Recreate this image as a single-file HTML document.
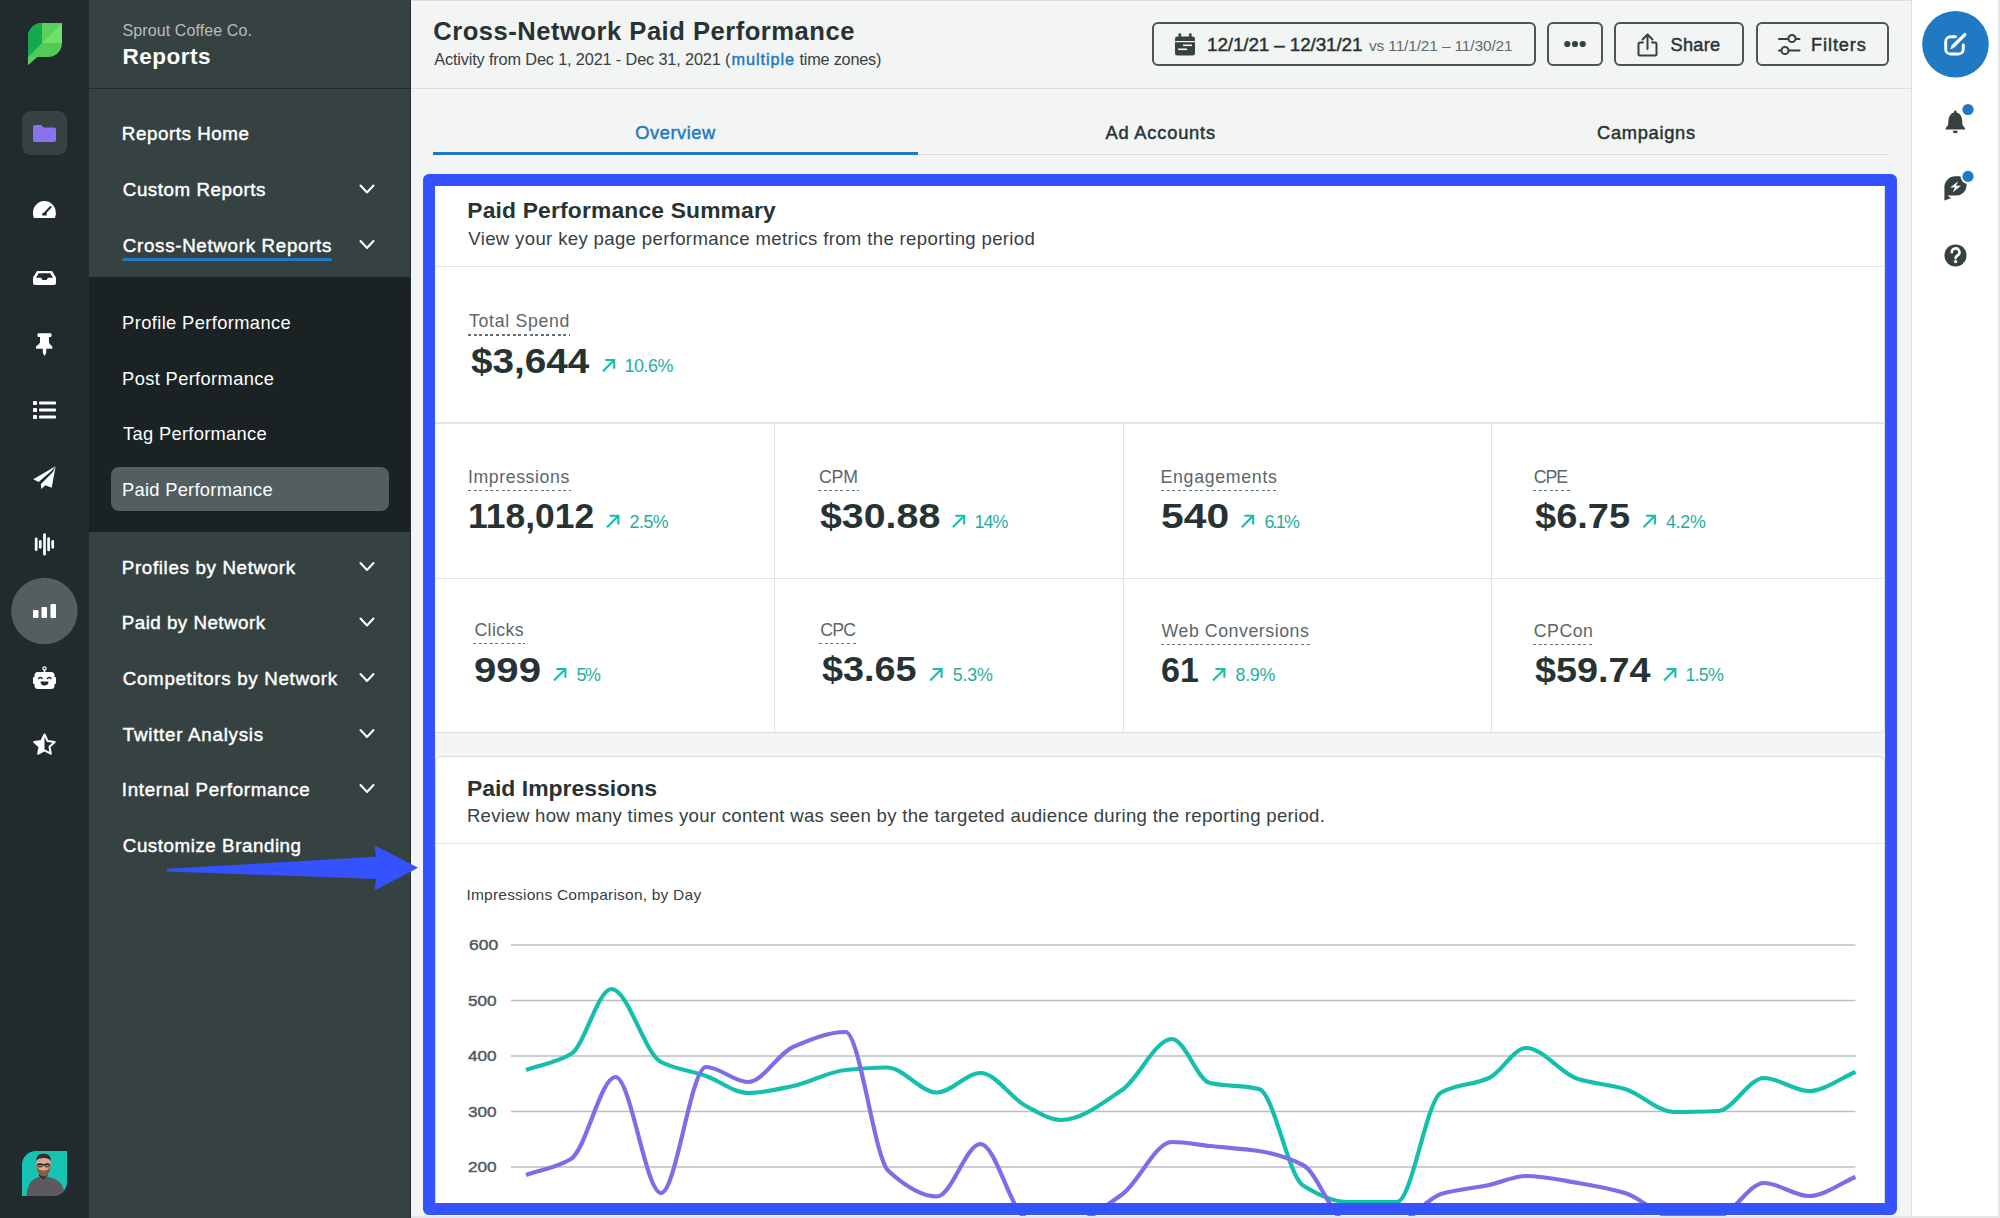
<!DOCTYPE html>
<html><head><meta charset="utf-8">
<style>
html,body{margin:0;padding:0;}
body{width:2000px;height:1218px;overflow:hidden;position:relative;background:#f3f4f4;font-family:"Liberation Sans",sans-serif;}
.a{position:absolute;}
.t{position:absolute;white-space:nowrap;line-height:1.2;font-family:"Liberation Sans",sans-serif;}
.ul{position:absolute;height:1.3px;background-image:repeating-linear-gradient(90deg,#657172 0 3px,transparent 3px 5.6px);}
.btn{position:absolute;box-sizing:border-box;border:2px solid #4b5657;border-radius:6px;top:22px;height:44px;}
</style></head>
<body>
<!-- main top hairline -->
<div class="a" style="left:411px;top:0;width:1589px;height:1px;background:#dcdfdf"></div>
<!-- left rail -->
<div class="a" style="left:0;top:0;width:89px;height:1218px;background:#212a2c"></div>
<!-- secondary nav -->
<div class="a" style="left:89px;top:0;width:322px;height:1218px;background:#364142"></div>
<div class="a" style="left:89px;top:88px;width:322px;height:1px;background:#222b2c"></div>
<div class="a" style="left:89px;top:277px;width:322px;height:255px;background:#1b2224"></div>
<div class="a" style="left:111px;top:467px;width:278px;height:44px;border-radius:8px;background:#525e5f"></div>
<div class="a" style="left:122px;top:258px;width:210px;height:3px;border-radius:1.5px;background:#2079c3"></div>
<div class="a" style="left:410px;top:0;width:1px;height:1218px;background:#2a3334"></div>

<!-- right rail -->
<div class="a" style="left:1911px;top:0;width:89px;height:1218px;background:#fff;border-left:1px solid #dcdfdf;box-sizing:border-box"></div>
<div class="a" style="left:1998px;top:0;width:2px;height:1218px;background:#e6e8e8"></div>

<!-- header lines -->
<div class="a" style="left:411px;top:88px;width:1500px;height:1px;background:#dcdfdf"></div>
<div class="a" style="left:918px;top:154px;width:970px;height:1px;background:#dcdfdf"></div>
<div class="a" style="left:433px;top:152px;width:485px;height:3px;background:#2079c3"></div>

<!-- buttons -->
<div class="btn" style="left:1152px;width:384px"></div>
<div class="btn" style="left:1547px;width:56px"></div>
<div class="btn" style="left:1614px;width:130px"></div>
<div class="btn" style="left:1756px;width:133px"></div>

<!-- card 1 -->
<div class="a" style="left:430px;top:180px;width:1455px;height:553px;background:#fff;border-bottom:1px solid #dcdfdf;border-right:1px solid #dcdfdf;border-radius:6px;box-sizing:border-box"></div>
<div class="a" style="left:435px;top:266px;width:1450px;height:1px;background:#e3e5e5"></div>
<div class="a" style="left:435px;top:422px;width:1450px;height:2px;background:#e3e5e5"></div>
<div class="a" style="left:435px;top:578px;width:1450px;height:1px;background:#e3e5e5"></div>
<div class="a" style="left:774px;top:423px;width:1px;height:309px;background:#e3e5e5"></div>
<div class="a" style="left:1123px;top:423px;width:1px;height:309px;background:#e3e5e5"></div>
<div class="a" style="left:1491px;top:423px;width:1px;height:309px;background:#e3e5e5"></div>
<!-- card 2 -->
<div class="a" style="left:435px;top:756px;width:1450px;height:470px;background:#fff;border-top:1px solid #dcdfdf;border-right:1px solid #dcdfdf;border-left:1px solid #dcdfdf;border-radius:6px;box-sizing:border-box"></div>
<div class="a" style="left:435px;top:843px;width:1450px;height:1px;background:#e3e5e5"></div>

<div class="ul" style="left:468.0px;top:334.3px;width:102.1px"></div><div class="ul" style="left:468.0px;top:489.9px;width:102.9px"></div><div class="ul" style="left:817.9px;top:489.9px;width:40.9px"></div><div class="ul" style="left:1160.5px;top:490.1px;width:118.0px"></div><div class="ul" style="left:1532.8px;top:490.1px;width:36.9px"></div><div class="ul" style="left:473.4px;top:643.1px;width:51.9px"></div><div class="ul" style="left:819.2px;top:642.9px;width:38.6px"></div><div class="ul" style="left:1160.5px;top:643.8px;width:150.0px"></div><div class="ul" style="left:1532.8px;top:643.8px;width:60.7px"></div>

<!-- chart -->
<svg class="a" style="left:0;top:0" width="2000" height="1218" viewBox="0 0 2000 1218">
 <g stroke="#babfbf" stroke-width="1.3">
  <line x1="511" y1="945" x2="1855.5" y2="945"/>
  <line x1="511" y1="1000.5" x2="1855.5" y2="1000.5"/>
  <line x1="511" y1="1056" x2="1855.5" y2="1056"/>
  <line x1="511" y1="1111.5" x2="1855.5" y2="1111.5"/>
  <line x1="511" y1="1167" x2="1855.5" y2="1167"/>
 </g>
 <path d="M526.0,1070.0 C541.0,1064.7 556.0,1062.8 571.0,1054.0 C584.5,1046.1 598.0,989.0 611.5,989.0 C628.0,989.0 644.5,1053.6 661.0,1062.0 C676.0,1069.6 691.0,1070.7 706.0,1076.0 C720.0,1080.9 734.0,1093.0 748.0,1093.0 C763.0,1093.0 778.0,1089.1 793.0,1086.0 C810.5,1082.4 828.0,1071.7 845.5,1070.0 C859.3,1068.6 873.2,1067.5 887.0,1067.5 C903.7,1067.5 920.3,1092.5 937.0,1092.5 C951.5,1092.5 966.0,1073.0 980.5,1073.0 C995.7,1073.0 1010.8,1098.3 1026.0,1106.0 C1037.7,1111.9 1049.3,1120.0 1061.0,1120.0 C1081.3,1120.0 1101.7,1103.7 1122.0,1090.0 C1138.7,1078.8 1155.3,1039.0 1172.0,1039.0 C1184.7,1039.0 1197.3,1080.1 1210.0,1083.0 C1226.3,1086.7 1242.7,1085.1 1259.0,1089.0 C1273.7,1092.5 1288.3,1176.3 1303.0,1185.5 C1318.0,1194.9 1333.0,1202.0 1348.0,1202.0 C1364.3,1202.0 1380.7,1202.0 1397.0,1202.0 C1411.7,1202.0 1426.3,1100.5 1441.0,1092.5 C1457.0,1083.8 1473.0,1085.2 1489.0,1078.0 C1501.3,1072.5 1513.7,1048.0 1526.0,1048.0 C1543.3,1048.0 1560.7,1073.6 1578.0,1079.0 C1593.7,1083.9 1609.3,1084.4 1625.0,1089.0 C1641.3,1093.8 1657.7,1112.0 1674.0,1112.0 C1688.7,1112.0 1703.3,1111.6 1718.0,1111.0 C1733.3,1110.3 1748.7,1078.0 1764.0,1078.0 C1779.0,1078.0 1794.0,1091.0 1809.0,1091.0 C1824.5,1091.0 1840.0,1078.3 1855.5,1072.0" fill="none" stroke="#14bfae" stroke-width="4.2" stroke-linejoin="round"/>
 <path d="M526.0,1175.0 C541.0,1169.7 556.0,1168.0 571.0,1159.0 C585.8,1150.1 600.7,1077.0 615.5,1077.0 C630.7,1077.0 645.8,1193.0 661.0,1193.0 C676.0,1193.0 691.0,1067.0 706.0,1067.0 C720.0,1067.0 734.0,1082.0 748.0,1082.0 C763.0,1082.0 778.0,1053.3 793.0,1047.0 C810.5,1039.6 828.0,1032.0 845.5,1032.0 C859.8,1032.0 874.2,1157.8 888.5,1171.0 C904.7,1185.8 920.8,1196.5 937.0,1196.5 C951.5,1196.5 966.0,1144.0 980.5,1144.0 C995.7,1144.0 1010.8,1212.1 1026.0,1218.0 C1037.7,1222.5 1049.3,1226.0 1061.0,1226.0 C1081.3,1226.0 1101.7,1208.7 1122.0,1194.5 C1138.7,1182.8 1155.3,1142.0 1172.0,1142.0 C1184.7,1142.0 1197.3,1144.7 1210.0,1146.0 C1226.3,1147.7 1242.7,1148.5 1259.0,1151.0 C1273.7,1153.3 1288.3,1157.6 1303.0,1165.0 C1318.0,1172.6 1333.0,1222.0 1348.0,1222.0 C1364.3,1222.0 1380.7,1222.0 1397.0,1222.0 C1411.7,1222.0 1426.3,1198.3 1441.0,1194.0 C1457.0,1189.3 1473.0,1188.4 1489.0,1185.0 C1501.3,1182.4 1513.7,1176.0 1526.0,1176.0 C1543.3,1176.0 1560.7,1180.1 1578.0,1183.0 C1593.7,1185.6 1609.3,1188.4 1625.0,1193.0 C1641.3,1197.8 1657.7,1217.0 1674.0,1217.0 C1688.7,1217.0 1703.3,1216.6 1718.0,1216.0 C1733.3,1215.3 1748.7,1183.0 1764.0,1183.0 C1779.0,1183.0 1794.0,1196.0 1809.0,1196.0 C1824.5,1196.0 1840.0,1183.3 1855.5,1177.0" fill="none" stroke="#7c6ee6" stroke-width="4.2" stroke-linejoin="round"/>
 <g fill="none" stroke="#14bfae" stroke-width="2.1" stroke-linecap="butt"><path d="M602.8,371.4 L614.2,360.0 M605.3,360.0 L614.2,360.0 L614.2,368.8" /><path d="M607.0,527.2 L618.4,515.8 M609.5,515.8 L618.4,515.8 L618.4,524.6" /><path d="M952.8,527.2 L964.2,515.8 M955.3,515.8 L964.2,515.8 L964.2,524.6" /><path d="M1241.8,527.2 L1253.2,515.8 M1244.3,515.8 L1253.2,515.8 L1253.2,524.6" /><path d="M1643.5,527.2 L1654.9,515.8 M1646.0,515.8 L1654.9,515.8 L1654.9,524.6" /><path d="M554.0,680.4 L565.4,669.0 M556.5,669.0 L565.4,669.0 L565.4,677.8" /><path d="M930.2,680.4 L941.6,669.0 M932.7,669.0 L941.6,669.0 L941.6,677.8" /><path d="M1213.0,680.4 L1224.4,669.0 M1215.5,669.0 L1224.4,669.0 L1224.4,677.8" /><path d="M1664.0,680.4 L1675.4,669.0 M1666.5,669.0 L1675.4,669.0 L1675.4,677.8" /></g>
</svg>

<div class="t" style="left:122.50px;top:21.20px;font-size:15.99px;font-weight:400;color:#b6bdbd;letter-spacing:0.112px;">Sprout Coffee Co.</div>
<div class="t" style="left:122.50px;top:43.00px;font-size:22.53px;font-weight:700;color:#ffffff;letter-spacing:0.492px;">Reports</div>
<div class="t" style="left:121.80px;top:123.40px;font-size:18.75px;font-weight:400;-webkit-text-stroke:0.45px #ffffff;color:#ffffff;letter-spacing:0.568px;">Reports Home</div>
<div class="t" style="left:122.80px;top:179.20px;font-size:18.75px;font-weight:400;-webkit-text-stroke:0.45px #ffffff;color:#ffffff;letter-spacing:0.547px;">Custom Reports</div>
<div class="t" style="left:122.80px;top:234.70px;font-size:18.75px;font-weight:400;-webkit-text-stroke:0.45px #ffffff;color:#ffffff;letter-spacing:0.687px;">Cross-Network Reports</div>
<div class="t" style="left:121.80px;top:556.70px;font-size:18.75px;font-weight:400;-webkit-text-stroke:0.45px #ffffff;color:#ffffff;letter-spacing:0.654px;">Profiles by Network</div>
<div class="t" style="left:121.80px;top:612.20px;font-size:18.75px;font-weight:400;-webkit-text-stroke:0.45px #ffffff;color:#ffffff;letter-spacing:0.483px;">Paid by Network</div>
<div class="t" style="left:122.80px;top:667.70px;font-size:18.75px;font-weight:400;-webkit-text-stroke:0.45px #ffffff;color:#ffffff;letter-spacing:0.677px;">Competitors by Network</div>
<div class="t" style="left:122.80px;top:723.90px;font-size:18.75px;font-weight:400;-webkit-text-stroke:0.45px #ffffff;color:#ffffff;letter-spacing:0.735px;">Twitter Analysis</div>
<div class="t" style="left:121.80px;top:778.80px;font-size:18.75px;font-weight:400;-webkit-text-stroke:0.45px #ffffff;color:#ffffff;letter-spacing:0.671px;">Internal Performance</div>
<div class="t" style="left:122.80px;top:834.60px;font-size:18.75px;font-weight:400;-webkit-text-stroke:0.45px #ffffff;color:#ffffff;letter-spacing:0.553px;">Customize Branding</div>
<div class="t" style="left:122.10px;top:311.90px;font-size:18.31px;font-weight:400;color:#ffffff;letter-spacing:0.383px;">Profile Performance</div>
<div class="t" style="left:122.10px;top:367.50px;font-size:18.31px;font-weight:400;color:#ffffff;letter-spacing:0.356px;">Post Performance</div>
<div class="t" style="left:123.10px;top:423.30px;font-size:18.31px;font-weight:400;color:#ffffff;letter-spacing:0.304px;">Tag Performance</div>
<div class="t" style="left:122.10px;top:479.00px;font-size:18.31px;font-weight:400;color:#ffffff;letter-spacing:0.275px;">Paid Performance</div>
<div class="t" style="left:433.20px;top:16.30px;font-size:25.58px;font-weight:700;color:#273333;letter-spacing:0.506px;">Cross-Network Paid Performance</div>
<div class="t" style="left:434.20px;top:49.90px;font-size:16.28px;font-weight:400;color:#364141;letter-spacing:-0.140px;">Activity from Dec 1, 2021 - Dec 31, 2021 (</div>
<div class="t" style="left:731.50px;top:49.90px;font-size:16.28px;font-weight:400;-webkit-text-stroke:0.45px #2079c3;color:#2079c3;letter-spacing:0.928px;">multiple</div>
<div class="t" style="left:799.50px;top:49.90px;font-size:16.28px;font-weight:400;color:#364141;letter-spacing:-0.215px;">time zones)</div>
<div class="t" style="left:635.30px;top:121.80px;font-size:18.31px;font-weight:400;-webkit-text-stroke:0.45px #2079c3;color:#2079c3;letter-spacing:0.523px;">Overview</div>
<div class="t" style="left:1105.40px;top:122.30px;font-size:18.31px;font-weight:400;-webkit-text-stroke:0.45px #273333;color:#273333;letter-spacing:0.803px;">Ad Accounts</div>
<div class="t" style="left:1597.00px;top:122.30px;font-size:18.31px;font-weight:400;-webkit-text-stroke:0.45px #273333;color:#273333;letter-spacing:0.700px;">Campaigns</div>
<div class="t" style="left:1207.00px;top:34.00px;font-size:18.9px;font-weight:400;-webkit-text-stroke:0.45px #273333;color:#273333;letter-spacing:-0.121px;">12/1/21 – 12/31/21</div>
<div class="t" style="left:1369.00px;top:36.80px;font-size:15.48px;font-weight:400;color:#5f6b6c;letter-spacing:-0.144px;">vs 11/1/21 – 11/30/21</div>
<div class="t" style="left:1670.50px;top:34.50px;font-size:18.17px;font-weight:400;-webkit-text-stroke:0.45px #273333;color:#273333;letter-spacing:0.287px;">Share</div>
<div class="t" style="left:1811.00px;top:34.50px;font-size:18.17px;font-weight:400;-webkit-text-stroke:0.45px #273333;color:#273333;letter-spacing:0.909px;">Filters</div>
<div class="t" style="left:467.30px;top:196.90px;font-size:22.82px;font-weight:700;color:#273333;letter-spacing:0.178px;">Paid Performance Summary</div>
<div class="t" style="left:468.30px;top:227.50px;font-size:18.6px;font-weight:400;color:#364141;letter-spacing:0.337px;">View your key page performance metrics from the reporting period</div>
<div class="t" style="left:469.00px;top:311.00px;font-size:17.73px;font-weight:400;color:#5b6667;letter-spacing:0.687px;">Total Spend</div>
<div class="t" style="left:470.60px;top:340.60px;font-size:34.16px;font-weight:700;color:#273333;transform:scaleX(1.1333);transform-origin:0 0;">$3,644</div>
<div class="t" style="left:624.40px;top:356.00px;font-size:17.88px;font-weight:400;color:#1fae9e;letter-spacing:-0.390px;">10.6%</div>
<div class="t" style="left:468.00px;top:466.60px;font-size:17.73px;font-weight:400;color:#5b6667;letter-spacing:0.574px;">Impressions</div>
<div class="t" style="left:468.13px;top:496.40px;font-size:34.16px;font-weight:700;color:#273333;transform:scaleX(1.0372);transform-origin:0 0;">118,012</div>
<div class="t" style="left:629.60px;top:511.80px;font-size:17.88px;font-weight:400;color:#1fae9e;letter-spacing:-0.542px;">2.5%</div>
<div class="t" style="left:818.90px;top:466.60px;font-size:17.73px;font-weight:400;color:#5b6667;letter-spacing:-0.107px;">CPM</div>
<div class="t" style="left:819.90px;top:496.20px;font-size:34.16px;font-weight:700;color:#273333;transform:scaleX(1.1510);transform-origin:0 0;">$30.88</div>
<div class="t" style="left:974.40px;top:511.80px;font-size:17.88px;font-weight:400;color:#1fae9e;letter-spacing:-0.833px;">14%</div>
<div class="t" style="left:1160.50px;top:466.80px;font-size:17.73px;font-weight:400;color:#5b6667;letter-spacing:0.702px;">Engagements</div>
<div class="t" style="left:1161.11px;top:496.40px;font-size:34.16px;font-weight:700;color:#273333;transform:scaleX(1.1947);transform-origin:0 0;">540</div>
<div class="t" style="left:1264.40px;top:511.80px;font-size:17.88px;font-weight:400;color:#1fae9e;letter-spacing:-1.742px;">6.1%</div>
<div class="t" style="left:1533.80px;top:466.80px;font-size:17.73px;font-weight:400;color:#5b6667;letter-spacing:-1.107px;">CPE</div>
<div class="t" style="left:1534.60px;top:496.40px;font-size:34.16px;font-weight:700;color:#273333;transform:scaleX(1.1126);transform-origin:0 0;">$6.75</div>
<div class="t" style="left:1666.10px;top:511.80px;font-size:17.88px;font-weight:400;color:#1fae9e;letter-spacing:-0.309px;">4.2%</div>
<div class="t" style="left:474.40px;top:619.80px;font-size:17.73px;font-weight:400;color:#5b6667;letter-spacing:0.402px;">Clicks</div>
<div class="t" style="left:474.43px;top:650.00px;font-size:34.16px;font-weight:700;color:#273333;transform:scaleX(1.1747);transform-origin:0 0;">999</div>
<div class="t" style="left:576.60px;top:665.00px;font-size:17.88px;font-weight:400;color:#1fae9e;letter-spacing:-1.533px;">5%</div>
<div class="t" style="left:820.20px;top:619.60px;font-size:17.73px;font-weight:400;color:#5b6667;letter-spacing:-0.757px;">CPC</div>
<div class="t" style="left:821.80px;top:649.20px;font-size:34.16px;font-weight:700;color:#273333;transform:scaleX(1.1067);transform-origin:0 0;">$3.65</div>
<div class="t" style="left:952.80px;top:665.00px;font-size:17.88px;font-weight:400;color:#1fae9e;letter-spacing:-0.242px;">5.3%</div>
<div class="t" style="left:1161.50px;top:620.50px;font-size:17.73px;font-weight:400;color:#5b6667;letter-spacing:0.560px;">Web Conversions</div>
<div class="t" style="left:1161.30px;top:649.60px;font-size:34.16px;font-weight:700;color:#273333;transform:scaleX(0.9974);transform-origin:0 0;">61</div>
<div class="t" style="left:1235.60px;top:665.00px;font-size:17.88px;font-weight:400;color:#1fae9e;letter-spacing:-0.309px;">8.9%</div>
<div class="t" style="left:1533.80px;top:620.50px;font-size:17.73px;font-weight:400;color:#5b6667;letter-spacing:0.484px;">CPCon</div>
<div class="t" style="left:1534.60px;top:649.60px;font-size:34.16px;font-weight:700;color:#273333;transform:scaleX(1.1065);transform-origin:0 0;">$59.74</div>
<div class="t" style="left:1685.60px;top:665.00px;font-size:17.88px;font-weight:400;color:#1fae9e;letter-spacing:-0.809px;">1.5%</div>
<div class="t" style="left:466.90px;top:774.70px;font-size:22.97px;font-weight:700;color:#273333;">Paid Impressions</div>
<div class="t" style="left:466.90px;top:805.00px;font-size:18.6px;font-weight:400;color:#364141;letter-spacing:0.292px;">Review how many times your content was seen by the targeted audience during the reporting period.</div>
<div class="t" style="left:466.40px;top:886.00px;font-size:15.55px;font-weight:400;color:#364141;letter-spacing:0.200px;">Impressions Comparison, by Day</div>
<div class="t" style="left:468.50px;top:936.30px;font-size:15.55px;font-weight:400;-webkit-text-stroke:0.45px #4f5b5c;color:#4f5b5c;transform:scaleX(1.1220);transform-origin:0 0;">600</div>
<div class="t" style="left:467.60px;top:991.80px;font-size:15.55px;font-weight:400;-webkit-text-stroke:0.45px #4f5b5c;color:#4f5b5c;transform:scaleX(1.1030);transform-origin:0 0;">500</div>
<div class="t" style="left:467.60px;top:1047.30px;font-size:15.55px;font-weight:400;-webkit-text-stroke:0.45px #4f5b5c;color:#4f5b5c;transform:scaleX(1.1030);transform-origin:0 0;">400</div>
<div class="t" style="left:467.60px;top:1102.80px;font-size:15.55px;font-weight:400;-webkit-text-stroke:0.45px #4f5b5c;color:#4f5b5c;transform:scaleX(1.1030);transform-origin:0 0;">300</div>
<div class="t" style="left:467.60px;top:1158.30px;font-size:15.55px;font-weight:400;-webkit-text-stroke:0.45px #4f5b5c;color:#4f5b5c;transform:scaleX(1.1030);transform-origin:0 0;">200</div>

<!-- icons: left rail -->
<svg class="a" style="left:0;top:0" width="89" height="1218" viewBox="0 0 89 1218">
 <!-- sprout logo -->
 <path d="M28,37 A14,14 0 0 1 42,23 H62 V43 A14,14 0 0 1 48,57 H37 L28,65 Z" fill="#52cb56"/>
 <path d="M28,37 A14,14 0 0 1 42,23 V43 L28,57 Z" fill="#14a94c"/>
 <path d="M42,23 H62 L42,43 Z" fill="#5bd15d"/>
 <path d="M62,23 V43 H42 Z" fill="#6edf69"/>
 <path d="M28,57 H37 L28,65 Z" fill="#58d25b"/>
 <!-- active square -->
 <rect x="22" y="111" width="45" height="44" rx="9" fill="#364142"/>
 <path d="M33,127 a2,2 0 0 1 2,-2 h6 l2.5,2.5 h10.5 a2,2 0 0 1 2,2 v10.5 a2,2 0 0 1 -2,2 h-19 a2,2 0 0 1 -2,-2 z" fill="#8b70f0"/>
 <!-- gauge -->
 <path d="M34,218 C33,216 33,214.5 33,212.5 A11.4,11.4 0 0 1 55.8,212.5 C55.8,214.5 55.8,216 54.8,218 Z" fill="#fff"/>
 <path d="M44.5,213.5 L50.6,207" stroke="#212a2c" stroke-width="1.9" stroke-linecap="round"/>
 <rect x="42.2" y="213" width="4.5" height="2.6" rx="0.6" fill="#212a2c"/>
 <!-- inbox -->
 <path d="M37,271 h15 l4,6.5 v5.5 a2,2 0 0 1 -2,2 h-19 a2,2 0 0 1 -2,-2 v-5.5 z" fill="#fff"/>
 <path d="M38.8,273.2 h11.4 l2.8,4.6 h-5 l-1.5,2.2 h-4 l-1.5,-2.2 h-5 z" fill="#212a2c"/>
 <!-- pin -->
 <path d="M38.5,333.2 H50.5 Q51.5,333.2 51.5,334.2 V336 Q51.5,336.9 50.5,336.9 H49 V342.5 Q49.5,344.5 52.3,346.2 V348.7 H46.2 V353.1 L44.5,356 L42.8,353.1 V348.7 H36.1 V346.2 Q39,344.5 40,342.5 V336.9 H38.5 Q37.5,336.9 37.5,336 V334.2 Q37.5,333.2 38.5,333.2 Z" fill="#fff"/>
 <!-- list -->
 <g fill="#fff"><rect x="33" y="401" width="4" height="4" rx="0.8"/><rect x="33" y="408" width="4" height="4" rx="0.8"/><rect x="33" y="415" width="4" height="4" rx="0.8"/>
 <rect x="39" y="401.5" width="17" height="3" rx="0.8"/><rect x="39" y="408.5" width="17" height="3" rx="0.8"/><rect x="39" y="415.5" width="17" height="3" rx="0.8"/></g>
 <!-- plane -->
 <path d="M55.6,466.3 L33.2,479.3 L38.6,482.1 L51.4,470.9 Z" fill="#fff"/>
 <path d="M55.6,466.3 L51.7,487.7 L45.3,485.3 L41.4,488.9 L40.8,484.2 L52.9,472.1 Z" fill="#fff"/>
 <!-- waveform -->
 <g stroke="#fff" stroke-width="2.7" stroke-linecap="round">
  <line x1="36.2" y1="538.8" x2="36.2" y2="549.7"/><line x1="40.3" y1="541.4" x2="40.3" y2="547.3"/>
  <line x1="44.5" y1="534.5" x2="44.5" y2="554.2"/><line x1="48.6" y1="538.6" x2="48.6" y2="550"/><line x1="52.7" y1="541.4" x2="52.7" y2="547.3"/></g>
 <!-- active circle -->
 <circle cx="44.4" cy="611" r="33.3" fill="#525e5f"/>
 <g fill="#fff"><rect x="33" y="610" width="5.5" height="8" rx="1"/><rect x="41.5" y="607" width="5.5" height="11" rx="1"/><rect x="50.5" y="604" width="5.5" height="14" rx="1"/></g>
 <!-- robot -->
 <circle cx="44.5" cy="668.5" r="1.6" fill="none" stroke="#fff" stroke-width="1.2"/>
 <rect x="43.8" y="669.5" width="1.4" height="3" fill="#fff"/>
 <rect x="34.5" y="672" width="20" height="17" rx="3.5" fill="#fff"/>
 <rect x="33" y="677" width="2.5" height="7" rx="1" fill="#fff"/><rect x="53.5" y="677" width="2.5" height="7" rx="1" fill="#fff"/>
 <path d="M38.5,678.5 q1.8,-2 3.6,0 M47.4,678.5 q1.8,-2 3.6,0" stroke="#212a2c" stroke-width="1.4" fill="none" stroke-linecap="round"/>
 <path d="M40.5,681.5 h8 a4,4 0 0 1 -8,0 z" fill="#212a2c"/>
 <!-- star -->
 <path d="M44.5,734.5 L47.6,741 L54.7,741.9 L49.5,746.7 L50.8,753.7 L44.5,750.3 L38.2,753.7 L39.5,746.7 L34.3,741.9 L41.4,741 Z" fill="none" stroke="#fff" stroke-width="2" stroke-linejoin="round"/>
 <path d="M44.5,734.5 L41.4,741 L34.3,741.9 L39.5,746.7 L38.2,753.7 L44.5,750.3 Z" fill="#fff"/>
 <!-- avatar -->
 <path d="M22,1165 A14,14 0 0 1 36,1151 H67 V1182 A14,14 0 0 1 53,1196 H22 Z" fill="#17c3b2"/>
 <clipPath id="av"><path d="M22,1165 A14,14 0 0 1 36,1151 H67 V1182 A14,14 0 0 1 53,1196 H22 Z"/></clipPath>
 <g clip-path="url(#av)">
  <path d="M26.5,1197 C27,1188 29,1181 36,1178 L43,1175.5 L52,1178 C59,1180 64,1185 65.5,1197 Z" fill="#5c5a60"/>
  <path d="M38.5,1175.5 L43.5,1179.5 L48,1175 L46,1173 L41,1173 Z" fill="#2f2c2e"/>
  <ellipse cx="43.6" cy="1164.5" rx="7.3" ry="9.6" fill="#d9a893"/>
  <path d="M36.3,1164 C36.5,1172 40,1176.5 43.6,1176.5 C47.2,1176.5 50.7,1172 50.9,1164 C50,1169 47,1170.5 43.6,1170.5 C40.2,1170.5 37.2,1169 36.3,1164 Z" fill="#8d5a3f"/>
  <path d="M36.2,1161 C36.5,1154.5 40,1153.8 43.6,1153.8 C47.2,1153.8 50.7,1154.5 51,1161 C49,1157 38,1157 36.2,1161 Z" fill="#3a2c28"/>
  <path d="M37.3,1164.6 h12.6" stroke="#2a2422" stroke-width="1.3"/>
  <rect x="37.8" y="1163.8" width="4.6" height="3" rx="1" fill="none" stroke="#2a2422" stroke-width="1"/><rect x="44.9" y="1163.8" width="4.6" height="3" rx="1" fill="none" stroke="#2a2422" stroke-width="1"/>
 </g>
</svg>

<!-- nav chevrons -->
<svg class="a" style="left:340px;top:0" width="60" height="900" viewBox="340 0 60 900">
 <g fill="none" stroke="#fff" stroke-width="2" stroke-linecap="round" stroke-linejoin="round">
  <path d="M360.5,185.5 L367,192.5 L373.5,185.5"/>
  <path d="M360.5,241 L367,248 L373.5,241"/>
  <path d="M360.5,563 L367,570 L373.5,563"/>
  <path d="M360.5,618.5 L367,625.5 L373.5,618.5"/>
  <path d="M360.5,674 L367,681 L373.5,674"/>
  <path d="M360.5,730 L367,737 L373.5,730"/>
  <path d="M360.5,785 L367,792 L373.5,785"/>
 </g>
</svg>

<!-- header icons -->
<svg class="a" style="left:1150px;top:0" width="760" height="90" viewBox="1150 0 760 90">
 <!-- calendar -->
 <rect x="1175" y="36.5" width="20" height="19" rx="2.5" fill="#364141"/>
 <rect x="1178.5" y="33.3" width="2.6" height="5" rx="1" fill="#364141"/><rect x="1189" y="33.3" width="2.6" height="5" rx="1" fill="#364141"/>
 <rect x="1175" y="41" width="20" height="1.2" fill="#f3f4f4"/>
 <rect x="1183" y="44.5" width="9" height="1.6" fill="#f3f4f4"/><rect x="1178" y="48.5" width="9" height="1.6" fill="#f3f4f4"/>
 <!-- dots -->
 <g fill="#364141"><circle cx="1567.3" cy="44" r="3.1"/><circle cx="1575" cy="44" r="3.1"/><circle cx="1582.7" cy="44" r="3.1"/></g>
 <!-- share -->
 <g fill="none" stroke="#364141" stroke-width="2" stroke-linecap="round" stroke-linejoin="round">
  <path d="M1643,42.5 H1640 a1.5,1.5 0 0 0 -1.5,1.5 V54 a1.5,1.5 0 0 0 1.5,1.5 H1655 a1.5,1.5 0 0 0 1.5,-1.5 V44 a1.5,1.5 0 0 0 -1.5,-1.5 H1652"/>
  <path d="M1647.5,49 V35 M1642.5,39.5 L1647.5,34.5 L1652.5,39.5"/>
 </g>
 <!-- filters -->
 <g fill="none" stroke="#364141" stroke-width="2" stroke-linecap="round">
  <path d="M1779,39 H1788.5 M1795.5,39 H1799.5"/>
  <circle cx="1792" cy="38.5" r="3.6"/>
  <path d="M1779,50.5 H1781.5 M1788.5,50.5 H1799.5"/>
  <circle cx="1785" cy="50.5" r="3.6"/>
 </g>
</svg>

<!-- right rail icons -->
<svg class="a" style="left:1911px;top:0" width="89" height="300" viewBox="1911 0 89 300">
 <circle cx="1955.5" cy="44.3" r="33.3" fill="#2079c3"/>
 <path d="M1955.5,36.8 H1950.5 a4.8,4.8 0 0 0 -4.8,4.8 V49.2 a4.8,4.8 0 0 0 4.8,4.8 H1958.5 a4.8,4.8 0 0 0 4.8,-4.8 V45" fill="none" stroke="#fff" stroke-width="2.9" stroke-linecap="round"/>
 <path d="M1952.6,46.8 L1962.3,37.1" stroke="#fff" stroke-width="3.4" stroke-linecap="butt"/>
 <path d="M1963.2,36.2 L1964.8,34.6" stroke="#fff" stroke-width="3.4" stroke-linecap="round"/>
 <path d="M1950.3,49.2 L1951.4,45.6 L1953.9,48.1 Z" fill="#fff"/>
 <!-- bell -->
 <g transform="translate(0,-1.6)"><path d="M1955.3,112 c1,0 1.4,0.8 1.4,2 c3.5,1 5.3,4 5.5,8 l0.3,4.5 l2.5,3.3 v1.2 h-19.4 v-1.2 l2.5,-3.3 l0.3,-4.5 c0.2,-4 2,-7 5.5,-8 c0,-1.2 0.4,-2 1.4,-2 z" fill="#364141"/>
 <path d="M1952.8,132.4 a2.5,2.5 0 0 0 5,0 z" fill="#364141"/></g>
 <circle cx="1968" cy="109.5" r="5.6" fill="#2079c3"/>
 <!-- bubble -->
 <path d="M1944.4,200.6 V187 A10.7,10.7 0 0 1 1955.1,176.3 H1959 C1961,176.3 1963,178 1966.6,182.5 V185.5 A10,10 0 0 1 1956.6,195.5 H1947.5 L1951,198.3 Z" fill="#364141"/>
 <path d="M1958.3,181.2 L1950.2,187.6 H1955 L1952.6,192.6 L1961,185.8 H1956 Z" fill="#fff"/>
 <circle cx="1968" cy="176.4" r="7.4" fill="#fff"/>
 <circle cx="1968" cy="176.4" r="5.6" fill="#2079c3"/>
 <!-- help -->
 <circle cx="1955.5" cy="255.4" r="11" fill="#364141"/>
 <path d="M1951.8,252.3 a3.8,3.8 0 1 1 5.7,3.2 c-1.2,0.7 -1.9,1.2 -1.9,2.6" fill="none" stroke="#fff" stroke-width="2.6" stroke-linecap="round"/>
 <circle cx="1955.6" cy="261.6" r="1.7" fill="#fff"/>
</svg>

<div class="a" style="left:411px;top:1216px;width:1589px;height:2px;background:#e4e6e6"></div>
<!-- annotation frame -->
<div class="a" style="left:423px;top:174px;width:1474px;height:1040.5px;box-sizing:border-box;border:12px solid #3452fe;border-bottom-width:12.5px;border-radius:6px"></div>
<svg class="a" style="left:150px;top:830px" width="280" height="70" viewBox="150 830 280 70">
 <path d="M167.5,868.8 L376,856.8 L374.8,848 Q374.5,845.5 377,846.6 L418.1,867.8 L377,889.2 Q374.5,890.4 374.8,888 L376,879 L167.5,871.4 Q166,870.1 167.5,868.8 Z" fill="#3452fe"/>
</svg>
</body></html>
